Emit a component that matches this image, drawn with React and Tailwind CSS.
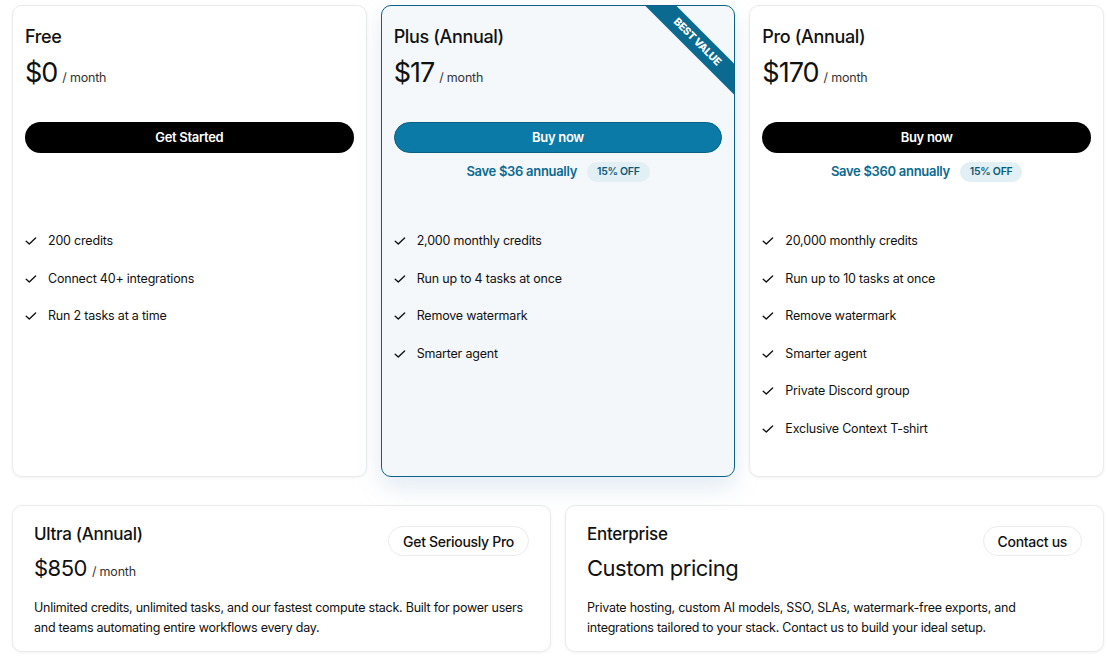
import React from 'react';

const plans = [
  {
    name: 'Free',
    price: '$0',
    cta: 'Get Started',
    save: null,
    features: ['200 credits', 'Connect 40+ integrations', 'Run 2 tasks at a time'],
  },
  {
    name: 'Plus (Annual)',
    price: '$17',
    cta: 'Buy now',
    save: 'Save $36 annually',
    featured: true,
    features: ['2,000 monthly credits', 'Run up to 4 tasks at once', 'Remove watermark', 'Smarter agent'],
  },
  {
    name: 'Pro (Annual)',
    price: '$170',
    cta: 'Buy now',
    save: 'Save $360 annually',
    features: [
      '20,000 monthly credits',
      'Run up to 10 tasks at once',
      'Remove watermark',
      'Smarter agent',
      'Private Discord group',
      'Exclusive Context T-shirt',
    ],
  },
];

function Check() {
  return (
    <svg width="12" height="12" viewBox="0 0 12 12" fill="none" className="shrink-0">
      <path d="M1.2 6.3 L4.3 9.1 L10.6 2.9" stroke="#111" strokeWidth="1.35" strokeLinecap="round" strokeLinejoin="round" />
    </svg>
  );
}

function PlanCard({ plan }) {
  const featured = plan.featured;
  return (
    <div
      className={
        'relative overflow-hidden rounded-[10px] px-3 pt-[19px] ' +
        (featured
          ? 'border-[1.5px] border-[#0b6186] bg-gradient-to-b from-[#f4f8fb] to-[#f3f7fa] shadow-[0_10px_24px_rgba(120,160,200,0.22)]'
          : 'border border-[#ebebeb] bg-white shadow-[0_1px_3px_rgba(0,0,0,0.06)]')
      }
    >
      {featured && (
        <div className="absolute right-[-38px] top-[25px] flex h-[22px] w-[150px] rotate-45 items-center justify-center bg-[#0a6a90]">
          <span className="text-[10.5px] font-extrabold tracking-[-0.3px] text-white">BEST VALUE</span>
        </div>
      )}
      <h2 className="text-[18px] font-medium leading-[24px] tracking-[-0.35px] text-[#111]">{plan.name}</h2>
      <div className="mt-[7px] flex items-baseline gap-[5px]">
        <span className="text-[27px] leading-[34px] tracking-[-1px] text-[#111]">{plan.price}</span>
        <span className="text-[12.5px] tracking-[-0.2px] text-[#333]">/ month</span>
      </div>
      <button
        className={
          'mt-[32px] flex h-[31px] w-full items-center justify-center rounded-full text-[13px] font-semibold tracking-[-0.3px] text-white ' +
          (featured ? 'border border-[#0a5f82] bg-[#0b7aa7]' : 'bg-black')
        }
      >
        {plan.cta}
      </button>
      <div className="mt-[9px] flex h-[20px] items-center justify-center gap-[10px]">
        {plan.save && (
          <>
            <span className="text-[13px] font-semibold tracking-[-0.3px] text-[#0b6b90]">{plan.save}</span>
            <span className="rounded-full bg-[#e2eff4] px-[10px] py-[2px] text-[10.5px] font-semibold tracking-[-0.3px] text-[#0b5a78]">
              15% OFF
            </span>
          </>
        )}
      </div>
      <ul className="mt-[50px] flex flex-col gap-[19.5px]">
        {plan.features.map((f) => (
          <li key={f} className="flex items-center gap-[11px] text-[12.5px] leading-[18px] tracking-[-0.2px] text-[#111]">
            <Check />
            <span>{f}</span>
          </li>
        ))}
      </ul>
    </div>
  );
}

function WideCard({ title, price, cta, desc }) {
  return (
    <div className="flex flex-col rounded-[10px] border border-[#ebebeb] bg-white px-[21px] pt-[16px] shadow-[0_1px_3px_rgba(0,0,0,0.06)]">
      <div className="flex items-start justify-between">
        <div>
          <h3 className="text-[17px] font-medium leading-[24px] tracking-[-0.3px] text-[#111]">{title}</h3>
          <div className="mt-[8px] flex items-baseline gap-[5px]">
            <span className="text-[22px] leading-[28px] tracking-[-0.5px] text-[#111]">{price}</span>
            {price.startsWith('$') && <span className="text-[12.5px] tracking-[-0.2px] text-[#333]">/ month</span>}
          </div>
        </div>
        <button className="mt-[4px] h-[30px] rounded-full border border-[#ececec] bg-white px-[14px] text-[14px] font-medium tracking-[-0.3px] text-[#111]">
          {cta}
        </button>
      </div>
      <p className="mt-[16px] text-[12.5px] leading-[20px] tracking-[-0.25px] text-[#111]">{desc}</p>
    </div>
  );
}

export default function App() {
  return (
    <div className="min-h-[657px] w-[1108px] bg-white pl-3 pt-[5px]" style={{ fontFamily: 'Inter, "Liberation Sans", sans-serif' }}>
      <div className="grid h-[472px] w-[1092px] grid-cols-3 gap-[14px]">
        {plans.map((p) => (
          <PlanCard key={p.name} plan={p} />
        ))}
      </div>
      <div className="mt-[28px] grid h-[147px] w-[1092px] grid-cols-2 gap-[14px]">
        <WideCard
          title="Ultra (Annual)"
          price="$850"
          cta="Get Seriously Pro"
          desc="Unlimited credits, unlimited tasks, and our fastest compute stack. Built for power users and teams automating entire workflows every day."
        />
        <WideCard
          title="Enterprise"
          price="Custom pricing"
          cta="Contact us"
          desc="Private hosting, custom AI models, SSO, SLAs, watermark-free exports, and integrations tailored to your stack. Contact us to build your ideal setup."
        />
      </div>
    </div>
  );
}
